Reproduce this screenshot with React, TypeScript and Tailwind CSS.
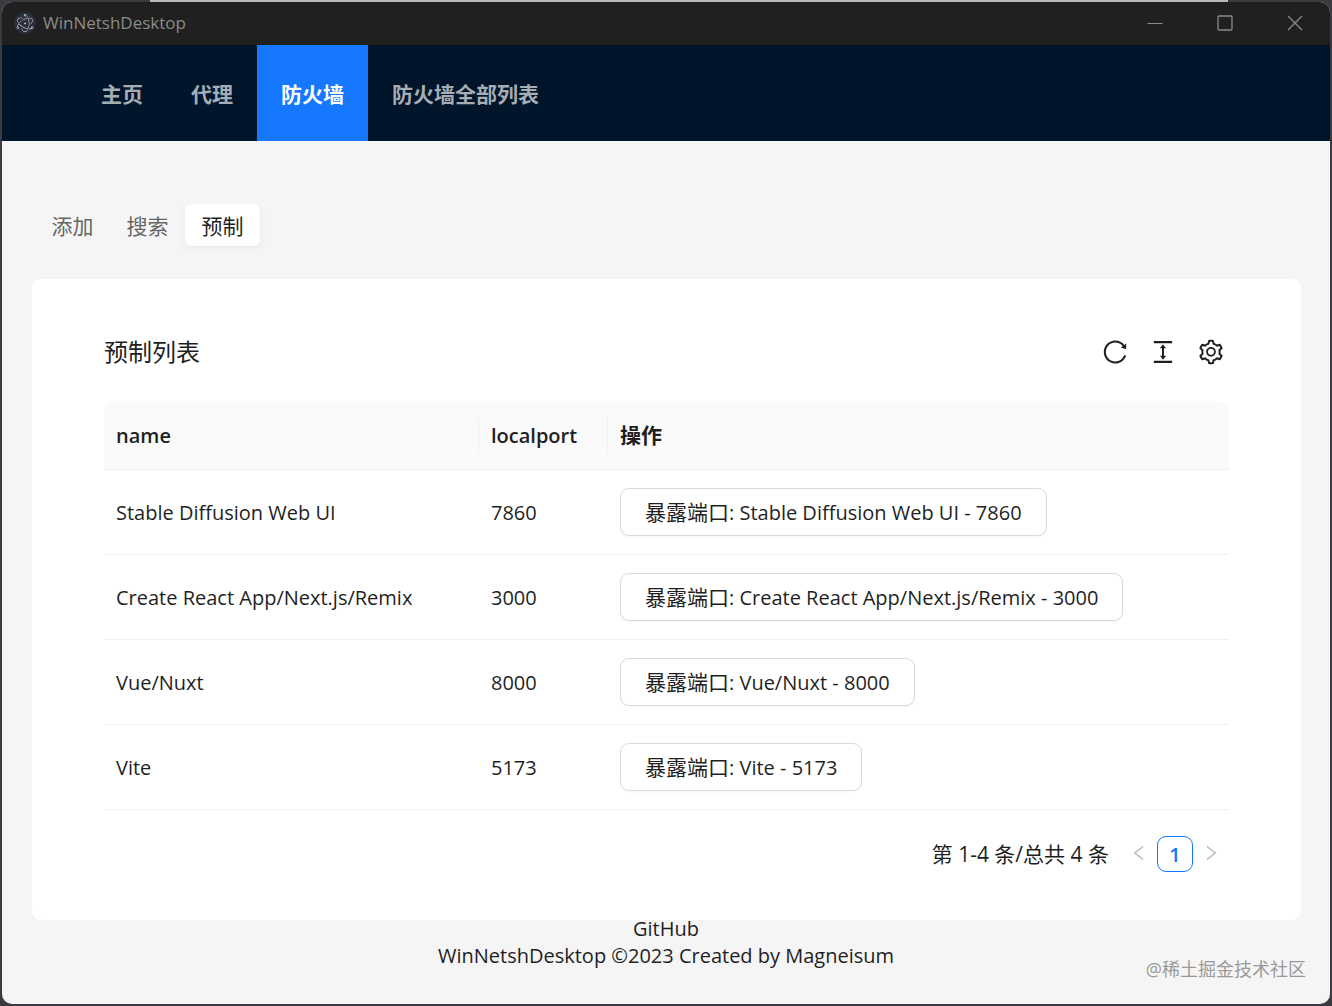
import React, { useState } from 'react';
import { AiOutlineReload, AiOutlineColumnHeight, AiOutlineSetting, AiOutlineLeft, AiOutlineRight } from 'react-icons/ai';
import { SiElectron } from 'react-icons/si';

const menu = ['主页', '代理', '防火墙', '防火墙全部列表'];
const tabs = ['添加', '搜索', '预制'];

const presets = [
    { name: 'Stable Diffusion Web UI', localport: 7860 },
    { name: 'Create React App/Next.js/Remix', localport: 3000 },
    { name: 'Vue/Nuxt', localport: 8000 },
    { name: 'Vite', localport: 5173 },
];

function TitleBar() {
    return (
        <header className="flex h-[43px] items-center bg-[#202020] pb-[2px] pl-3 text-[#8a8a8a]">
            <span className="flex size-[22px] items-center justify-center rounded-full bg-[#2b2e3b] text-[#e4eef8]">
                <SiElectron size={18} />
            </span>
            <span className="ml-[7px] grow text-[17px]">WinNetshDesktop</span>
            <button aria-label="Minimize" className="flex h-full w-[70px] items-center justify-center">
                <svg width="16" height="16" fill="none" stroke="currentColor"><path d="M0.5 8.5h15" /></svg>
            </button>
            <button aria-label="Maximize" className="flex h-full w-[70px] items-center justify-center">
                <svg width="16" height="16" fill="none" stroke="currentColor"><rect x="1" y="1" width="14" height="14" rx="1" strokeWidth="1.3" /></svg>
            </button>
            <button aria-label="Close" className="flex h-full w-[70px] items-center justify-center">
                <svg width="16" height="16" fill="none" stroke="currentColor"><path d="M1 1l14 14M15 1L1 15" strokeWidth="1.3" /></svg>
            </button>
        </header>
    );
}

function PresetTable() {
    return (
        <table className="w-full table-fixed border-separate border-spacing-0 text-left">
            <thead>
                <tr className="h-[69px]">
                    <th className="w-1/3 rounded-tl-xl border-b border-[#f0f0f0] bg-[#fafafa] font-semibold">
                        <div className="flex h-9 items-center border-r border-[#f0f0f0] px-3">name</div>
                    </th>
                    <th className="w-[129px] border-b border-[#f0f0f0] bg-[#fafafa] font-semibold">
                        <div className="flex h-9 items-center border-r border-[#f0f0f0] px-3">localport</div>
                    </th>
                    <th className="rounded-tr-xl border-b border-[#f0f0f0] bg-[#fafafa] px-3 text-[21px] font-bold">操作</th>
                </tr>
            </thead>
            <tbody>
                {presets.map((preset) => (
                    <tr className="h-[85px]" key={preset.name}>
                        <td className="border-b border-[#f0f0f0] px-3">{preset.name}</td>
                        <td className="border-b border-[#f0f0f0] px-3">{preset.localport}</td>
                        <td className="border-b border-[#f0f0f0] px-3">
                            <button className="h-12 rounded-[9px] border border-[#d9d9d9] bg-white px-6 shadow-[0_2px_0_rgba(0,0,0,0.02)]">
                                <span className="text-[21px]">暴露端口</span>: {preset.name} - {preset.localport}
                            </button>
                        </td>
                    </tr>
                ))}
            </tbody>
        </table>
    );
}

export default function App() {
    const [page, setPage] = useState('防火墙');
    const [tab, setTab] = useState('预制');

    return (
        <div className="flex min-h-screen flex-col bg-[#3a3a40] font-['Open_Sans','Noto_Sans_CJK_SC',sans-serif] text-[20px] leading-[33px] text-[#1f1f1f]">
            {/* the window behind */}
            <div className="mr-[104px] ml-[150px] h-[2px] bg-[#b9b9b9]" />
            <div className="relative mx-[2px] mb-[2px] flex grow flex-col overflow-hidden rounded-[10px] bg-[#f5f5f5]">
                <TitleBar />
                <nav className="flex h-24 bg-[#001529] pl-[75px] text-[21px] font-bold">
                    {menu.map((item) => (
                        <a
                            href="#"
                            key={item}
                            onClick={() => setPage(item)}
                            className={item === page ? 'flex items-center bg-[#1677ff] px-6 pt-[2px] text-white' : 'flex items-center px-6 pt-[2px] text-[#a6adb4]'}
                        >
                            {item}
                        </a>
                    ))}
                </nav>
                <main className="pt-[60px] pr-[29px] pl-[30px]">
                    <div className="flex p-[3px] text-[21px]">
                        {tabs.map((item) => (
                            <button
                                key={item}
                                onClick={() => setTab(item)}
                                className={
                                    item === tab
                                        ? 'h-[42px] w-[75px] rounded-md bg-white pt-[2px] shadow-[0_2px_6px_rgba(0,0,0,0.06)]'
                                        : 'h-[42px] w-[75px] pt-[2px] text-[#666666]'
                                }
                            >
                                {item}
                            </button>
                        ))}
                    </div>
                    <section className="mt-[30px] rounded-[9px] bg-white px-[72px] pt-12 pb-12">
                        <div className="flex h-[74px] items-start justify-between pt-2">
                            <h2 className="text-[24px]">预制列表</h2>
                            <div className="flex gap-5 pt-[3px] pr-1">
                                <button aria-label="刷新"><AiOutlineReload size={28} /></button>
                                <button aria-label="密度"><AiOutlineColumnHeight size={28} /></button>
                                <button aria-label="列设置"><AiOutlineSetting size={28} /></button>
                            </div>
                        </div>
                        <PresetTable />
                        <div className="mt-[26px] flex h-9 items-center justify-end">
                            <span className="mr-3 text-[21px]">第 1-4 条/总共 4 条</span>
                            <button aria-label="上一页" disabled className="flex size-9 items-center justify-center pb-[2px] text-[#bfbfbf]"><AiOutlineLeft size={20} /></button>
                            <button className="flex size-9 items-center justify-center rounded-[9px] border border-[#1677ff] font-semibold text-[#1677ff]">1</button>
                            <button aria-label="下一页" disabled className="flex size-9 items-center justify-center pb-[2px] text-[#bfbfbf]"><AiOutlineRight size={20} /></button>
                        </div>
                    </section>
                </main>
                <footer className="text-center">
                    <a href="#" className="block leading-[18px]">GitHub</a>
                    <p className="leading-9">WinNetshDesktop ©2023 Created by Magneisum</p>
                </footer>
                <span className="absolute right-6 bottom-[18px] text-[18px] text-[#9a9a9a]">@稀土掘金技术社区</span>
            </div>
        </div>
    );
}
